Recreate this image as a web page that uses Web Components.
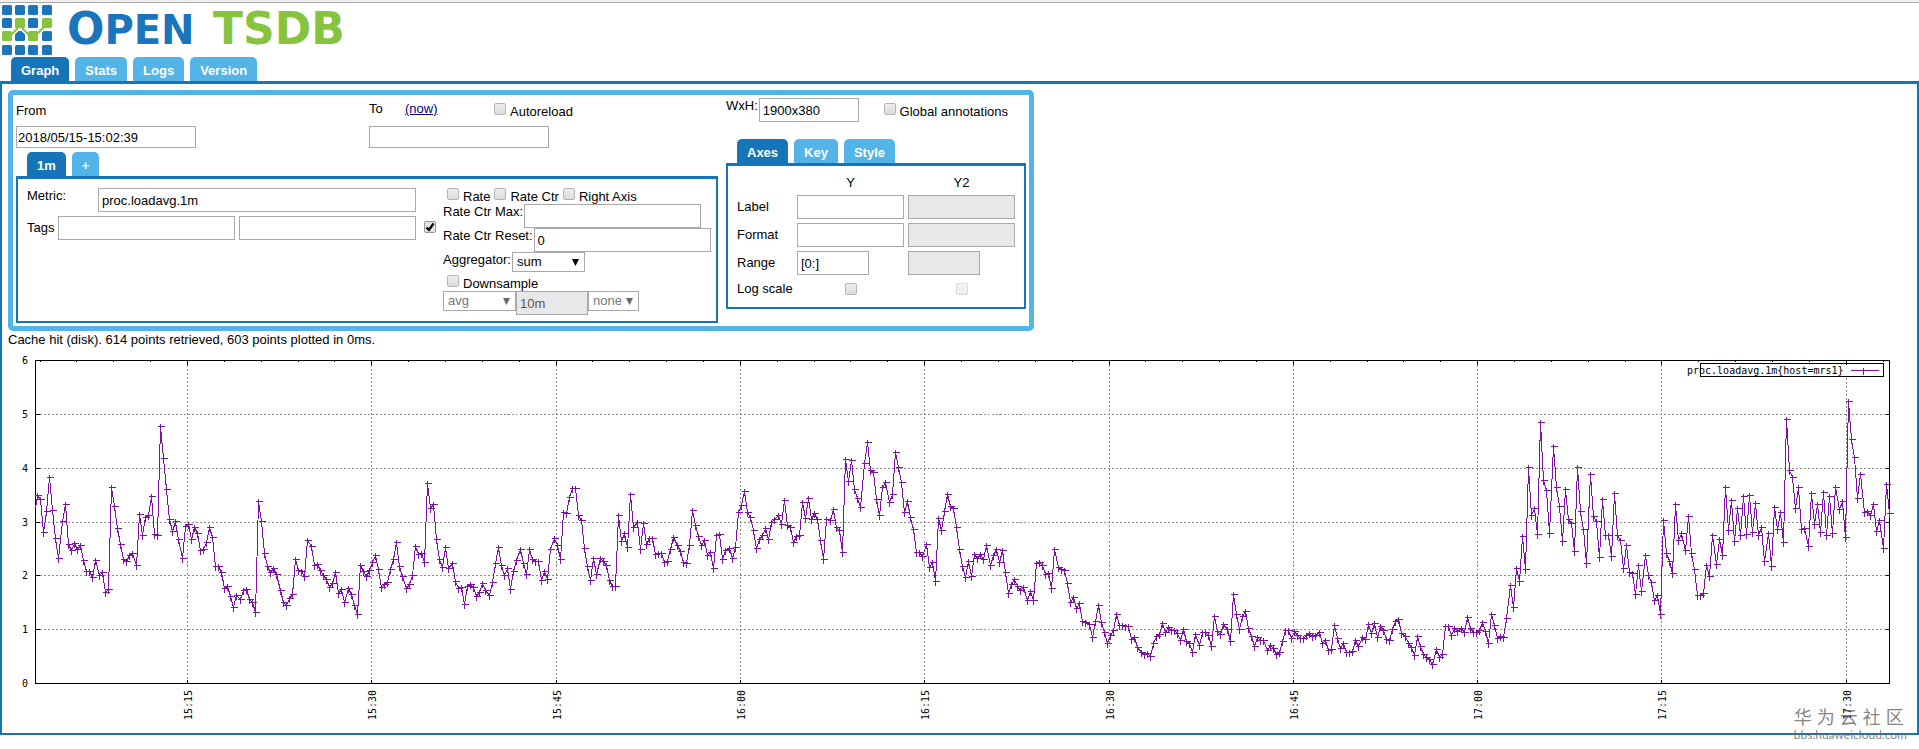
<!DOCTYPE html>
<html lang="en">
<head>
<meta charset="utf-8">
<title>OpenTSDB</title>
<style>
    body {
        margin: 0;
        background: #fff;
        color: #000;
        font: 13px/16px "Liberation Sans", Arial, sans-serif;
        --dark: #1674b8;
        --light: #52b4e7;
        --line: #a9a9a9;
    }
</style>
</head>
<body>
<tsdb-app></tsdb-app>

<script>
const controls = `
    * {
        box-sizing: border-box;
    }

    input, select {
        margin: 0;
        border: 1px solid var(--line);
        border-radius: 0;
        background: #fff;
        color: #000;
        font: inherit;
    }

    input {
        height: 24px;
        padding: 0 3px;
    }

    select {
        appearance: none;
        height: 20px;
        padding: 0 4px;
        background: #fff url('data:image/svg+xml,<svg xmlns="http://www.w3.org/2000/svg" width="7" height="7"><path d="M0 0h7L3.500 7z"/></svg>') no-repeat right 5px top 6px;
    }

    input:disabled {
        background: #e8e8e8;
        color: #555;
    }

    select:disabled {
        color: #777;
        opacity: 1;
        background-image: url('data:image/svg+xml,<svg xmlns="http://www.w3.org/2000/svg" width="7" height="7"><path fill="dimgray" d="M0 0h7L3.500 7z"/></svg>');
    }

    input[type=checkbox] {
        appearance: none;
        flex: none;
        width: 12px;
        height: 12px;
        padding: 0;
        border: 1px solid #b4b4b4;
        border-radius: 2px;
        background: linear-gradient(#ededed, #dcdcdc);
    }

    input[type=checkbox]:checked {
        border-color: #999;
        background: #e4e4e4 url('data:image/svg+xml,<svg xmlns="http://www.w3.org/2000/svg" width="10" height="10"><path d="M1.500 5.500L4 8L8.500 1.500" fill="none" stroke="black" stroke-width="2.200"/></svg>') no-repeat center;
    }

    input[type=checkbox]:disabled {
        opacity: .5;
    }
`;

class Component extends HTMLElement {
    constructor() {
        super();
        this.attachShadow({ mode: 'open' });
    }

    connectedCallback() {
        this.shadowRoot.innerHTML = this.render();
    }
}

/**
 * Logo: the tile mark and the two coloured halves of the name
 */
class Logo extends Component {
    tiles(wanted) {
        const at = [2, 15, 28, 42];
        const green = ['1,1', '3,1', '0,2', '2,2'];
        let out = '';

        at.forEach((y, row) => at.forEach((x, col) => {
            if (green.includes(`${col},${row}`) === wanted) {
                out += `<rect x="${x}" y="${y}" width="10" height="10" rx="1.500"/>`;
            }
        }));

        return out;
    }

    render() {
        const links = 'M10 33L18 25M22 25L31 34M34 34L44 24';

        return `
            <style>
                :host {
                    display: block;
                    height: 54px;
                }

                svg {
                    display: block;
                }

                text {
                    font-family: "DejaVu Sans", sans-serif;
                    font-weight: bold;
                }
            </style>
            <svg width="400" height="54" role="img" aria-label="OpenTSDB">
                <g fill="#1b75bc">${this.tiles(false)}</g>
                <path d="${links}" fill="none" stroke="#fff" stroke-width="5"/>
                <path d="${links}" fill="none" stroke="#86c440" stroke-width="2"/>
                <g fill="#86c440">${this.tiles(true)}</g>
                <text x="67" y="41" font-size="44" fill="#1b75bc">O<tspan font-size="40">PEN</tspan></text>
                <text x="213" y="41" font-size="44" fill="#86c440">TSDB</text>
            </svg>
        `;
    }
}

/**
 * Tab bar with a framed panel below it
 *
 * @param tabs comma separated tab titles, the first one is active
 */
class Tabs extends Component {
    render() {
        const titles = this.getAttribute('tabs').split(',');

        return `
            <style>
                :host {
                    display: block;
                }

                nav {
                    display: flex;
                    gap: 6px;
                    padding: 0 11px;
                }

                button {
                    height: 24px;
                    padding: 4px 10px 0;
                    border: 0;
                    border-radius: 5px 5px 0 0;
                    background: var(--light);
                    color: #fff;
                    font: bold 13px/16px "Liberation Sans", Arial, sans-serif;
                }

                button[aria-selected=true] {
                    background: var(--dark);
                }

                section {
                    border: 2px solid var(--dark);
                    border-top-width: 3px;
                }
            </style>
            <nav role="tablist">
                ${titles.map((title, i) => `<button role="tab" aria-selected="${i === 0}">${title}</button>`).join('')}
            </nav>
            <section><slot></slot></section>
        `;
    }
}

/**
 * Tick box followed by its label
 */
class Check extends Component {
    render() {
        return `
            <style>
                ${controls}

                :host {
                    display: inline-block;
                }

                label {
                    display: flex;
                    gap: 4px;
                }

                span {
                    padding-top: 1px;
                    white-space: nowrap;
                }
            </style>
            <label><input type="checkbox"><span><slot></slot></span></label>
        `;
    }
}

/**
 * Text box with its label in front
 *
 * @param value initial text
 * @param size width of the box in pixels
 */
class Field extends Component {
    render() {
        return `
            <style>
                ${controls}

                :host {
                    display: block;
                }

                label {
                    display: flex;
                    gap: 1px;
                    white-space: nowrap;
                }

                input {
                    flex: none;
                    width: ${this.getAttribute('size')}px;
                }
            </style>
            <label><slot></slot><input type="text" value="${this.getAttribute('value') || ''}"></label>
        `;
    }
}

class DateRange extends Component {
    render() {
        return `
            <style>
                ${controls}

                :host {
                    display: grid;
                    grid-template-columns: 1fr 1fr;
                    column-gap: 4px;
                }

                .head {
                    display: flex;
                    height: 28px;
                    padding-top: 3px;
                }

                .from {
                    padding-top: 5px;
                }

                .head label {
                    width: 36px;
                }

                a {
                    width: 89px;
                    color: #00007c;
                }

                input {
                    width: 180px;
                    height: 22px;
                    padding: 0 1px;
                }

                tsdb-check {
                    padding-top: 2px;
                }
            </style>
            <div>
                <div class="head from"><label for="from">From</label></div>
                <input id="from" type="text" value="2018/05/15-15:02:39">
            </div>
            <div>
                <div class="head">
                    <label for="to">To</label>
                    <a href="#now">(now)</a>
                    <tsdb-check>Autoreload</tsdb-check>
                </div>
                <input id="to" type="text">
            </div>
        `;
    }
}

class Metric extends Component {
    render() {
        return `
            <style>
                ${controls}

                :host {
                    display: flex;
                    padding: 9px 4px 6px 9px;
                }

                .names {
                    display: flex;
                    flex: none;
                    flex-direction: column;
                    gap: 4px;
                    width: 389px;
                }

                .names div {
                    display: flex;
                    justify-content: space-between;
                }

                #metric {
                    width: 318px;
                }

                .tag {
                    width: 177px;
                }

                .tags label {
                    padding-top: 4px;
                }

                .enabled {
                    margin: 33px 7px 0 8px;
                }

                .checks {
                    display: flex;
                    gap: 4px;
                    height: 16px;
                    padding-left: 4px;
                }

                .down {
                    padding: 3px 0 0 4px;
                    height: 19px;
                }

                .row {
                    display: flex;
                }

                .row label {
                    margin-right: 1px;
                }

                .wide {
                    width: 73px;
                }

                .interval {
                    width: 72px;
                }

                .fill {
                    width: 51px;
                }
            </style>
            <div class="names">
                <div><label for="metric">Metric:</label><input id="metric" type="text" value="proc.loadavg.1m"></div>
                <div class="tags">
                    <label for="tagk">Tags</label>
                    <input id="tagk" class="tag" type="text">
                    <input class="tag" type="text" aria-label="Tag value">
                </div>
            </div>
            <input class="enabled" type="checkbox" checked aria-label="Enabled">
            <div>
                <div class="checks">
                    <tsdb-check>Rate</tsdb-check>
                    <tsdb-check>Rate Ctr</tsdb-check>
                    <tsdb-check>Right Axis</tsdb-check>
                </div>
                <tsdb-field size="177">Rate Ctr Max:</tsdb-field>
                <tsdb-field size="177" value="0">Rate Ctr Reset:</tsdb-field>
                <div class="row">
                    <label for="agg">Aggregator:</label>
                    <select id="agg" class="wide"><option>sum</option></select>
                </div>
                <div class="down"><tsdb-check>Downsample</tsdb-check></div>
                <div class="row">
                    <select class="wide" disabled aria-label="Downsampler"><option>avg</option></select>
                    <input class="interval" type="text" value="10m" disabled aria-label="Interval">
                    <select class="fill" disabled aria-label="Fill policy"><option>none</option></select>
                </div>
            </div>
        `;
    }
}

class Axes extends Component {
    render() {
        return `
            <style>
                ${controls}

                :host {
                    display: grid;
                    grid-template-columns: 56px 107px 107px;
                    grid-template-rows: 16px 24px 24px 24px 20px;
                    gap: 4px;
                    align-items: center;
                    padding: 9px 9px 8px;
                }

                .center {
                    justify-self: center;
                }

                .range {
                    width: 72px;
                }
            </style>
            <span></span><span class="center">Y</span><span class="center">Y2</span>
            <label for="label">Label</label>
            <input id="label" type="text">
            <input type="text" disabled aria-label="Y2 label">
            <label for="format">Format</label>
            <input id="format" type="text">
            <input type="text" disabled aria-label="Y2 format">
            <label for="range">Range</label>
            <input id="range" class="range" type="text" value="[0:]">
            <input class="range" type="text" disabled aria-label="Y2 range">
            <label for="log">Log scale</label>
            <input id="log" class="center" type="checkbox">
            <input class="center" type="checkbox" disabled aria-label="Y2 log scale">
        `;
    }
}

/**
 * Load average plot, 1900x380 like the WxH option
 *
 * Every run is a start position followed by one level per sample, both on a
 * grid of a third of a pixel. Samples are spread evenly up to the next run.
 */
const runs = [
    [107, [490]],
    [112, [451,463,562,499,397,496,580,640,529,478,598,616,595,613,601,646,679,679,697,646,691,682,742,733]],
    [334, [427,484,550,598,643,649,631,625,661,508,571,517,511,454,568,571]],
    [482, [244,340,433,523,559,529,583,640,544,538,583,547,565,616,613,592,547,577,664,664,682,730,724,754,787,751,763,736,733,763,772,802]],
    [775, [469,529,625,664,682,670,688,736,772,781,760,748,643,676,679,694,586,604,661,658]],
    [961, [676,690,703,727,715,682,745,733,772,730,748,781,808]],
    [1081, [661,679,694,676,652,631,673,727,718,712,673,643,592,664,694,730,718,691,604,628,625,652]],
    [1282, [414,490,478,583,643,667,607,670,655,709,730,727,778,724,718,727,754,742,715,736,751,712,655]],
    [1495, [607,661,691,670,733,679,646,613,655,688,613,643,649,649,706,679,703,613,580,601,643]],
    [1690, [502,505,457,430,430,511,526,610,664,706,640,688,640,649,661,706,724,724]],
    [1855, [511,589,565,607,448,547,532,613]],
    [1930, [535,598,580,580,628,625,625,652,649,613,577,601,619,652,655,601]],
    [2077, [496,541,574,601,586,631,622,670,571,568,643,616,610,640,607,502,481]],
    [2233, [439,502,517,556,610,583,571,550,583,532,523,511,538,466,541,547,592,574,571,472,520,460,523,505,523,586,643,523,526,493,547,556,622]],
    [2536, [343,409,346,433,460,487,355,292,376,382,463,511,427,412,472,448]],
    [2686, [322,367,412,502,469,517,553,622,622,634,598,667,652,709]],
    [2815, [520,556,499,448,484,490,547,613,664]],
    [2896, [697,649,694,628,640,628,643,601,661,631,613,652,616,682,745,718,703,724,736,727,766,739,766]],
    [3109, [655,652,661,688,685,730,613,667,673,676,715,772,757,790,775,829,832,838,877,829]],
    [3295, [781,832,862,895,871,856,808,841,841,844,844,883,877,907,922,928,925,934,895,874,868]],
    [3487, [835,862,847,856,856,865,886,853,889,895,922,868,901,862,862,871,904]],
    [3643, [814,859,868,838,853,889]],
    [3700, [748,808,853,814,799,850,874,904,877,886,886,916,901,910,928,922]],
    [3847, [889,856,856,880,859,871,880,880,871,865,874,871,862,895,886,916,913]],
    [4003, [841,880,910,895,922,922,919,886,904,877,883,838,865,835,877,844,856,883,886,853,829,823,865,874,895,907,931]],
    [4252, [874,904,928,937,943,958,913,937,928,844,844,871,850,859,850,862]],
    [4402, [817,850,862,862,856,832,859,895,808,841,880,874,877,820,721,787,670,709,574,673]],
    [4585, [367,511,490,568,232,406,436,565,304,427,484,589,433,523,535,619,367,499,553,655,388,514,529,637]],
    [4807, [463,571,571,634,445,571,586,670,601,682,685,748,661,739,631,691,712,766,751,808]],
    [4990, [526,625,649,685,478,586,565,616,514,625,673,751,751,745,661,694,571,658,583,631]],
    [5176, [427,556,466,589,490,571,454,568,451,562,475,571,547,649,565,664,487,553,502,592]],
    [5359, [223,376,397,490,427,553,550,604,445,538,478,562,442,571,454,565,427,493,469,577]],
    [5545, [169,283,337,460,388,502,499,511,478,559,526,610,418]],
    [5668, [505]]
];

class Graph extends Component {
    samples() {
        const points = [];

        runs.forEach(([start, levels], i) => {
            const end = i + 1 < runs.length ? runs[i + 1][0] : start;

            levels.forEach((level, n) => {
                const x = start + (end - start) * n / levels.length;
                points.push([Math.floor(x / 3) - 8, Math.floor(level / 3) - 8]);
            });
        });

        return points;
    }

    render() {
        const points = this.samples();
        const left = 27, right = 1881, top = 7, bottom = 330;
        let grid = '', ticks = '', labels = '';

        for (let v = 0; v <= 6; v++) {
            const y = Math.round(bottom - v * (bottom - top) / 6);

            if (v > 0 && v < 6) {
                grid += `M${left} ${y}H${right}`;
            }
            ticks += `M${left} ${y}h4M${right} ${y}h-4`;
            labels += `<text x="14" y="${y + 4}">${v}</text>`;
        }

        // a tick every 3 minutes, a labelled one every 15
        for (let i = -4; i <= 48; i++) {
            const x = Math.floor(179.5 + i * 36.86);
            const major = i % 5 === 0;
            const size = major ? 4 : 1;

            ticks += `M${x} ${top}v${size}M${x} ${bottom}v${-size}`;
            if (major) {
                const minutes = 915 + i * 3;
                const time = `${Math.floor(minutes / 60)}:${String(minutes % 60).padStart(2, '0')}`;

                grid += x > 1692 ? `M${x} 24V${bottom}` : `M${x} ${top}V${bottom}`;
                labels += `<text transform="translate(${x + 5} 367) rotate(-90)">${time}</text>`;
            }
        }

        return `
            <style>
                :host {
                    display: block;
                }

                svg {
                    display: block;
                }

                path, polyline, rect {
                    fill: none;
                    stroke: #000;
                    shape-rendering: crispEdges;
                }

                text {
                    font: 10px "DejaVu Sans Mono", monospace;
                }

                .grid {
                    stroke: #8c8c8c;
                    stroke-dasharray: 2 2;
                }

                .trace {
                    stroke: #7f12a6;
                }
            </style>
            <svg width="1900" height="380" role="img" aria-label="proc.loadavg.1m">
                <g transform="translate(.5 .5)">
                    <path class="grid" d="${grid}"/>
                    <path d="${ticks}"/>
                    <rect x="${left}" y="${top}" width="${right - left}" height="${bottom - top}"/>
                    <polyline class="trace" points="${points.join(' ')}"/>
                    <path class="trace" d="${points.slice(1).map(([x, y]) => `M${x - 3} ${y}h7M${x} ${y - 3}v7`).join('')}"/>
                    <rect x="1692" y="10" width="183" height="13"/>
                    <path class="trace" d="M1842 17h28M1853 17h7M1855 14v7"/>
                </g>
                ${labels}
                <text x="1679" y="21">proc.loadavg.1m{host=mrs1}</text>
            </svg>
        `;
    }
}

class Watermark extends Component {
    render() {
        return `
            <style>
                :host {
                    position: absolute;
                    right: 12px;
                    bottom: 7px;
                    color: rgba(100, 100, 100, .8);
                    font: 12px/14px Lato, sans-serif;
                }

                strong {
                    display: block;
                    font: 18px/20px "Liberation Sans", "Noto Sans CJK SC", sans-serif;
                }
            </style>
            <strong lang="zh">华 为 云 社 区</strong>bbs.huaweicloud.com
        `;
    }
}

class App extends Component {
    render() {
        return `
            <style>
                :host {
                    display: block;
                    position: relative;
                    box-sizing: border-box;
                    min-height: 100vh;
                    border-top: 2px solid #f1f1f1;
                }

                header {
                    border-top: 1px solid #aaa;
                }

                .page {
                    padding: 6px 6px 0;
                }

                .options {
                    display: flex;
                    gap: 8px;
                    width: fit-content;
                    padding: 3px;
                    border: 5px solid var(--light);
                    border-radius: 5px;
                }

                .query {
                    display: flex;
                    flex-direction: column;
                    gap: 4px;
                    width: 702px;
                }

                .side {
                    width: 300px;
                }

                .size {
                    display: flex;
                    justify-content: space-between;
                    margin-bottom: 17px;
                    padding-right: 18px;
                }

                .size tsdb-check {
                    padding-top: 5px;
                }

                .status {
                    margin: 0;
                    padding: 1px 0 5px;
                }
            </style>
            <header><tsdb-logo></tsdb-logo></header>
            <tsdb-tabs tabs="Graph,Stats,Logs,Version">
                <div class="page">
                    <form class="options">
                        <div class="query">
                            <tsdb-dates></tsdb-dates>
                            <tsdb-tabs tabs="1m,+"><tsdb-metric></tsdb-metric></tsdb-tabs>
                        </div>
                        <div class="side">
                            <div class="size">
                                <tsdb-field size="100" value="1900x380">WxH:</tsdb-field>
                                <tsdb-check>Global annotations</tsdb-check>
                            </div>
                            <tsdb-tabs tabs="Axes,Key,Style"><tsdb-axes></tsdb-axes></tsdb-tabs>
                        </div>
                    </form>
                    <p class="status">Cache hit (disk). 614 points retrieved, 603 points plotted in 0ms.</p>
                    <tsdb-graph></tsdb-graph>
                </div>
            </tsdb-tabs>
            <tsdb-watermark></tsdb-watermark>
        `;
    }
}

customElements.define('tsdb-logo', Logo);
customElements.define('tsdb-tabs', Tabs);
customElements.define('tsdb-check', Check);
customElements.define('tsdb-field', Field);
customElements.define('tsdb-dates', DateRange);
customElements.define('tsdb-metric', Metric);
customElements.define('tsdb-axes', Axes);
customElements.define('tsdb-graph', Graph);
customElements.define('tsdb-watermark', Watermark);
customElements.define('tsdb-app', App);
</script>
</body>
</html>
